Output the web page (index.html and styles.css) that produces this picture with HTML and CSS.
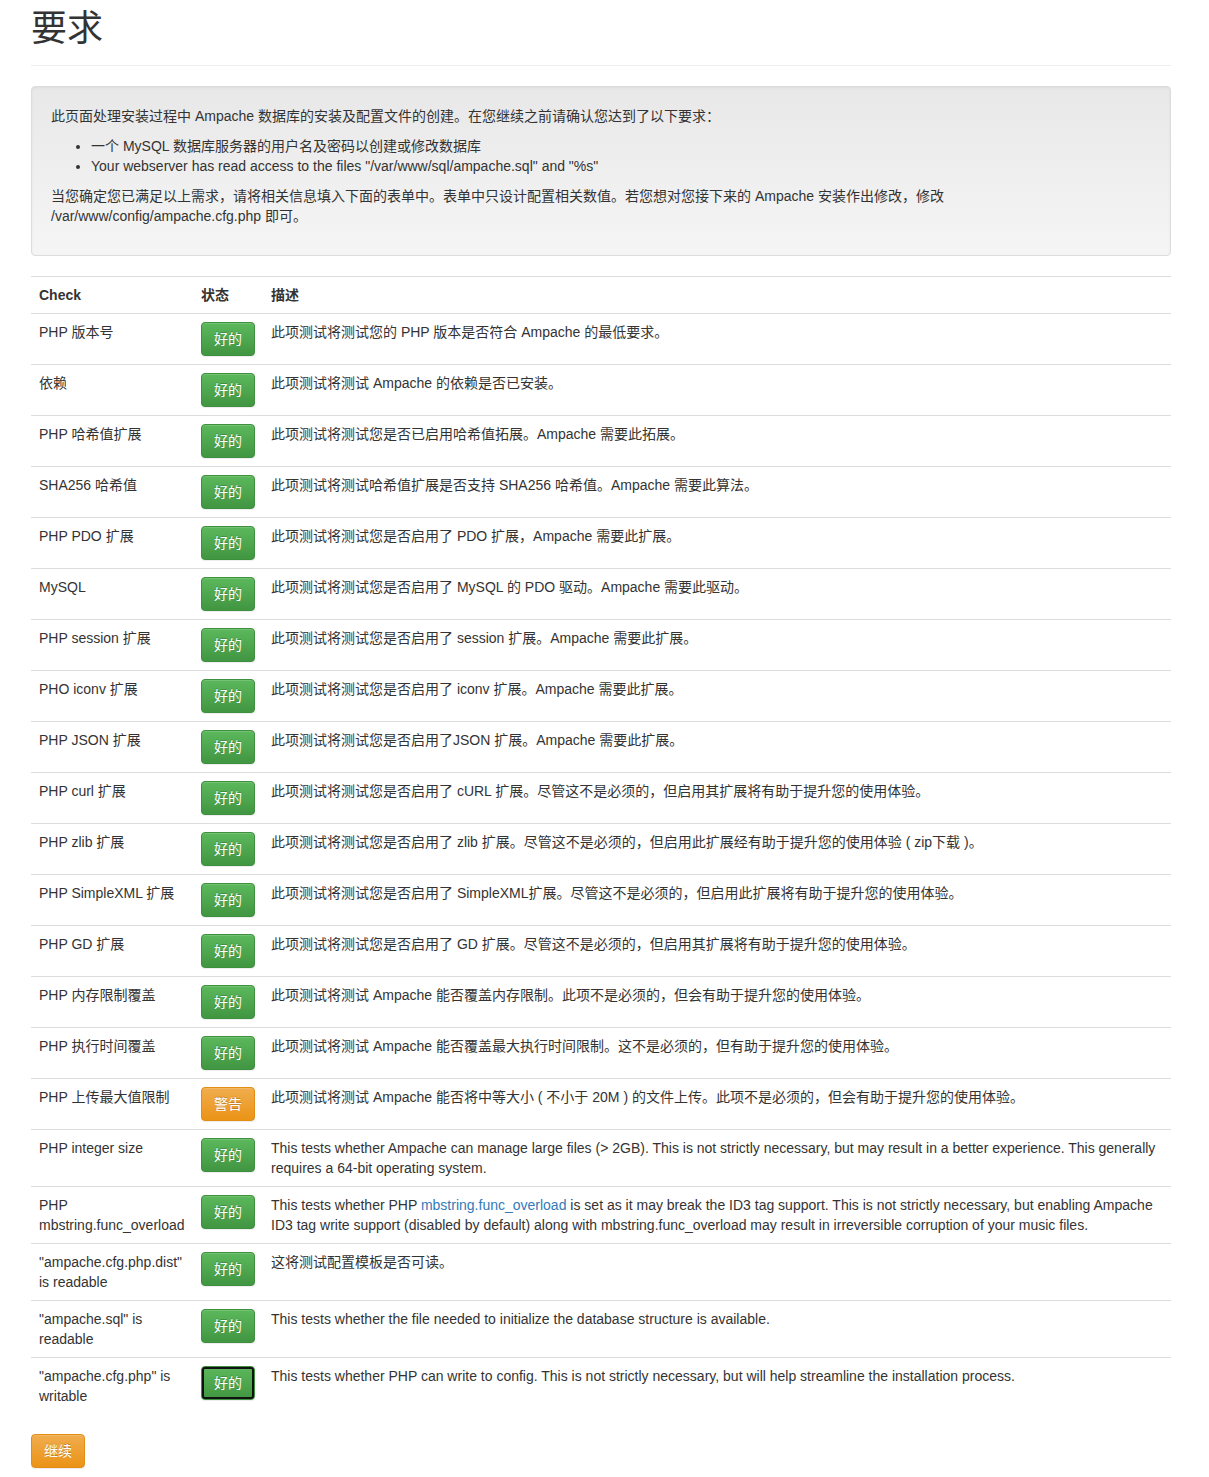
FILE: index.html
```html
<!DOCTYPE html>
<html lang="zh-CN">
<head>
  <meta charset="UTF-8" />
  <meta name="viewport" content="width=device-width, initial-scale=1.0" />
  <title>Ampache 安装 - 要求</title>
  <link rel="stylesheet" href="styles.css">
</head>
<body>
  <div class="container">
    <div class="page-header">
      <h1>要求</h1>
    </div>

    <div class="well">
      <p>此页面处理安装过程中 Ampache 数据库的安装及配置文件的创建。在您继续之前请确认您达到了以下要求：</p>
      <ul>
        <li>一个 MySQL 数据库服务器的用户名及密码以创建或修改数据库</li>
        <li>Your webserver has read access to the files "/var/www/sql/ampache.sql" and "%s"</li>
      </ul>
      <p>当您确定您已满足以上需求，请将相关信息填入下面的表单中。表单中只设计配置相关数值。若您想对您接下来的 Ampache 安装作出修改，修改 /var/www/config/ampache.cfg.php 即可。</p>
    </div>

    <table class="table">
      <thead>
        <tr>
          <th class="col-check">Check</th>
          <th class="col-status">状态</th>
          <th>描述</th>
        </tr>
      </thead>
      <tbody>
        <tr>
          <td>PHP 版本号</td>
          <td><button class="btn btn-success">好的</button></td>
          <td>此项测试将测试您的 PHP 版本是否符合 Ampache 的最低要求。</td>
        </tr>
        <tr>
          <td>依赖</td>
          <td><button class="btn btn-success">好的</button></td>
          <td>此项测试将测试 Ampache 的依赖是否已安装。</td>
        </tr>
        <tr>
          <td>PHP 哈希值扩展</td>
          <td><button class="btn btn-success">好的</button></td>
          <td>此项测试将测试您是否已启用哈希值拓展。Ampache 需要此拓展。</td>
        </tr>
        <tr>
          <td>SHA256 哈希值</td>
          <td><button class="btn btn-success">好的</button></td>
          <td>此项测试将测试哈希值扩展是否支持 SHA256 哈希值。Ampache 需要此算法。</td>
        </tr>
        <tr>
          <td>PHP PDO 扩展</td>
          <td><button class="btn btn-success">好的</button></td>
          <td>此项测试将测试您是否启用了 PDO 扩展，Ampache 需要此扩展。</td>
        </tr>
        <tr>
          <td>MySQL</td>
          <td><button class="btn btn-success">好的</button></td>
          <td>此项测试将测试您是否启用了 MySQL 的 PDO 驱动。Ampache 需要此驱动。</td>
        </tr>
        <tr>
          <td>PHP session 扩展</td>
          <td><button class="btn btn-success">好的</button></td>
          <td>此项测试将测试您是否启用了 session 扩展。Ampache 需要此扩展。</td>
        </tr>
        <tr>
          <td>PHO iconv 扩展</td>
          <td><button class="btn btn-success">好的</button></td>
          <td>此项测试将测试您是否启用了 iconv 扩展。Ampache 需要此扩展。</td>
        </tr>
        <tr>
          <td>PHP JSON 扩展</td>
          <td><button class="btn btn-success">好的</button></td>
          <td>此项测试将测试您是否启用了JSON 扩展。Ampache 需要此扩展。</td>
        </tr>
        <tr>
          <td>PHP curl 扩展</td>
          <td><button class="btn btn-success">好的</button></td>
          <td>此项测试将测试您是否启用了 cURL 扩展。尽管这不是必须的，但启用其扩展将有助于提升您的使用体验。</td>
        </tr>
        <tr>
          <td>PHP zlib 扩展</td>
          <td><button class="btn btn-success">好的</button></td>
          <td>此项测试将测试您是否启用了 zlib 扩展。尽管这不是必须的，但启用此扩展经有助于提升您的使用体验 ( zip下载 )。</td>
        </tr>
        <tr>
          <td>PHP SimpleXML 扩展</td>
          <td><button class="btn btn-success">好的</button></td>
          <td>此项测试将测试您是否启用了 SimpleXML扩展。尽管这不是必须的，但启用此扩展将有助于提升您的使用体验。</td>
        </tr>
        <tr>
          <td>PHP GD 扩展</td>
          <td><button class="btn btn-success">好的</button></td>
          <td>此项测试将测试您是否启用了 GD 扩展。尽管这不是必须的，但启用其扩展将有助于提升您的使用体验。</td>
        </tr>
        <tr>
          <td>PHP 内存限制覆盖</td>
          <td><button class="btn btn-success">好的</button></td>
          <td>此项测试将测试 Ampache 能否覆盖内存限制。此项不是必须的，但会有助于提升您的使用体验。</td>
        </tr>
        <tr>
          <td>PHP 执行时间覆盖</td>
          <td><button class="btn btn-success">好的</button></td>
          <td>此项测试将测试 Ampache 能否覆盖最大执行时间限制。这不是必须的，但有助于提升您的使用体验。</td>
        </tr>
        <tr>
          <td>PHP 上传最大值限制</td>
          <td><button class="btn btn-warning">警告</button></td>
          <td>此项测试将测试 Ampache 能否将中等大小 ( 不小于 20M ) 的文件上传。此项不是必须的，但会有助于提升您的使用体验。</td>
        </tr>
        <tr>
          <td>PHP integer size</td>
          <td><button class="btn btn-success">好的</button></td>
          <td>This tests whether Ampache can manage large files (&gt; 2GB). This is not strictly necessary, but may result in a better experience. This generally requires a 64-bit operating system.</td>
        </tr>
        <tr>
          <td>PHP mbstring.func_overload</td>
          <td><button class="btn btn-success">好的</button></td>
          <td>This tests whether PHP <a href="#">mbstring.func_overload</a> is set as it may break the ID3 tag support. This is not strictly necessary, but enabling Ampache ID3 tag write support (disabled by default) along with mbstring.func_overload may result in irreversible corruption of your music files.</td>
        </tr>
        <tr>
          <td>"ampache.cfg.php.dist" is readable</td>
          <td><button class="btn btn-success">好的</button></td>
          <td>这将测试配置模板是否可读。</td>
        </tr>
        <tr>
          <td>"ampache.sql" is readable</td>
          <td><button class="btn btn-success">好的</button></td>
          <td>This tests whether the file needed to initialize the database structure is available.</td>
        </tr>
        <tr>
          <td>"ampache.cfg.php" is writable</td>
          <td><button class="btn btn-success is-focused">好的</button></td>
          <td>This tests whether PHP can write to config. This is not strictly necessary, but will help streamline the installation process.</td>
        </tr>
      </tbody>
    </table>

    <button class="btn btn-warning">继续</button>
  </div>
</body>
</html>
```

FILE: styles.css
```css
body {
  margin: 0;
  font-family: "Liberation Sans", Arial, "Noto Sans CJK SC", sans-serif;
  font-size: 14px;
  line-height: 20px;
  color: #333;
  background: #fff;
}
.container {
  width: 1140px;
  padding: 0 0 9px 31px;
}
.page-header {
  margin: 0 0 20px;
  padding-bottom: 9px;
  border-bottom: 1px solid #eee;
}
.page-header h1 {
  margin: 9px 0 7px;
  font-size: 36px;
  font-weight: 400;
  line-height: 1.1;
}
.well {
  padding: 19px;
  margin-bottom: 20px;
  border: 1px solid #dcdcdc;
  border-radius: 4px;
  background-image: linear-gradient(to bottom, #e8e8e8 0, #f5f5f5 100%);
  box-shadow: inset 0 1px 3px rgba(0, 0, 0, 0.05), 0 1px 0 rgba(255, 255, 255, 0.1);
}
.well p {
  margin: 0 0 10px;
}
.well ul {
  margin: 0 0 10px;
  padding-left: 40px;
}
.table {
  width: 100%;
  border-collapse: collapse;
  border-spacing: 0;
  margin-bottom: 20px;
}
.table th,
.table td {
  padding: 8px;
  text-align: left;
  vertical-align: top;
  border-top: 1px solid #ddd;
}
.table th {
  font-weight: bold;
  border-bottom: 1px solid #ddd;
}
.table tbody tr:first-child td {
  border-top: 0;
}
.col-check {
  width: 146px;
}
.col-status {
  width: 54px;
}
a {
  color: #337ab7;
  text-decoration: none;
}
.btn {
  display: inline-block;
  padding: 6px 12px;
  font-family: inherit;
  font-size: 14px;
  line-height: 20px;
  color: #fff;
  border: 1px solid transparent;
  border-radius: 4px;
  text-shadow: 0 -1px 0 rgba(0, 0, 0, 0.2);
  box-shadow: inset 0 1px 0 rgba(255, 255, 255, 0.15), 0 1px 1px rgba(0, 0, 0, 0.075);
  cursor: pointer;
  vertical-align: middle;
}
.btn-success {
  background-image: linear-gradient(to bottom, #5cb85c 0, #419641 100%);
  border-color: #3e8f3e;
}
.btn-warning {
  background-image: linear-gradient(to bottom, #f0ad4e 0, #eb9316 100%);
  border-color: #e38d13;
}
.btn.is-focused {
  outline: 2px solid #111;
  outline-offset: -3px;
}
```
